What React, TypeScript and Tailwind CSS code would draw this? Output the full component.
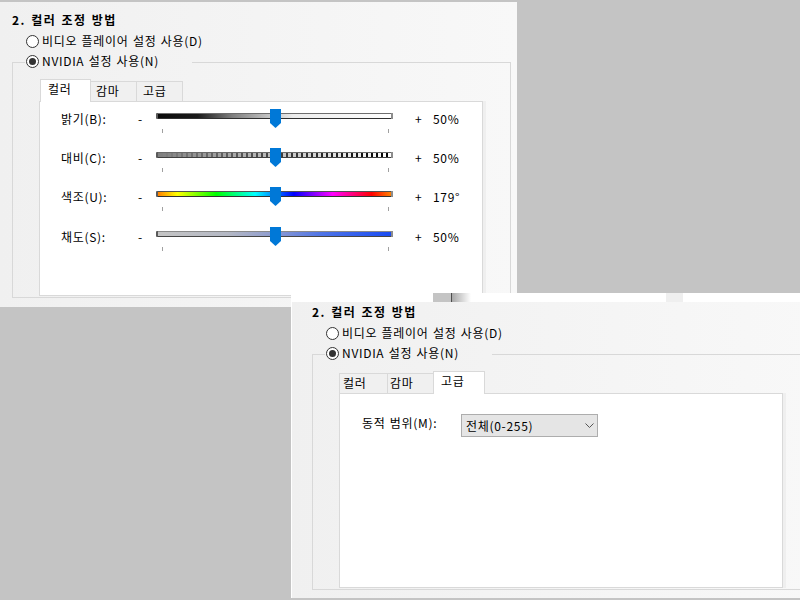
import React from "react";

function Radio({ checked, label }: { checked?: boolean; label: string }) {
  return (
    <div className="flex h-[16px] items-center">
      <span className="flex h-[13px] w-[13px] shrink-0 items-center justify-center rounded-full border border-[#333333] bg-white">
        {checked && <span className="h-[7px] w-[7px] rounded-full bg-[#333333]" />}
      </span>
      <span className="ml-[3px] whitespace-nowrap">{label}</span>
    </div>
  );
}

function ContrastFill() {
  const w = 233;
  const rects: React.ReactNode[] = [];
  for (let x = 0; x < w; x += 5) {
    const t = x / w;
    const light = Math.round(128 + 127 * t);
    const dark = Math.round(128 - 128 * t);
    rects.push(
      <rect key={"l" + x} x={x} y={0} width={3} height={4} fill={`rgb(${light},${light},${light})`} />
    );
    rects.push(
      <rect key={"d" + x} x={x + 3} y={0} width={2} height={4} fill={`rgb(${dark},${dark},${dark})`} />
    );
  }
  return (
    <div className="flex-1 border-y border-t-[#6a6a6a] border-b-[#404040]">
      <svg width={w} height={4} className="block">
        {rects}
      </svg>
    </div>
  );
}

function Fill({ kind }: { kind: string }) {
  if (kind === "c") return <ContrastFill />;
  if (kind === "b")
    return (
      <div className="flex-1 border-y border-t-[#6e6e6e] border-b-[#303030] bg-[linear-gradient(to_right,#0a0a0a_0%,#1a1a1a_17%,#808080_32%,#bdbdbd_46%,#ececec_58%,#ffffff_100%)]" />
    );
  if (kind === "h")
    return (
      <div className="flex-1 border-y border-t-[#505050] border-b-[#303030] bg-[linear-gradient(to_right,#ff8000_0%,#ffff00_8.3%,#00ff00_25%,#00ffff_41.7%,#0000ff_58.3%,#ff00ff_75%,#ff0000_91.7%,#ff8000_100%)]" />
    );
  return (
    <div className="flex-1 border-y border-t-[#8a8a8a] border-b-[#454545] bg-[linear-gradient(to_right,#c4c4c4_0%,#b4b8c4_30%,#8d9bd0_50%,#4f74e6_70%,#1a4cf2_100%)]" />
  );
}

function Slider({ kind }: { kind: string }) {
  return (
    <div className="flex w-[237px] shrink-0 flex-col">
      <div className="relative h-[19px]">
        <div className="mt-[4px] flex h-[6px] w-[237px]">
          <div className="w-[2px] rounded-l-[1px] bg-[#5a5a5a]" />
          <Fill kind={kind} />
          <div className="w-[2px] bg-[#8c8c8c]" />
        </div>
        <svg width="11" height="19" viewBox="0 0 11 19" className="absolute left-[114px] top-0">
          <path d="M0 0H11V14L5.5 19L0 14Z" fill="#0078d7" />
        </svg>
      </div>
      <div className="mt-[1px] flex h-[4px] justify-between pl-[6px] pr-[4px]">
        <div className="h-[4px] w-[1px] bg-[#a0a0a0]" />
        <div className="h-[4px] w-[1px] bg-[#a0a0a0]" />
      </div>
    </div>
  );
}

const rows = [
  { label: "밝기(B):", value: "50%", kind: "b", h: "h-[39px]" },
  { label: "대비(C):", value: "50%", kind: "c", h: "h-[39px]" },
  { label: "색조(U):", value: "179°", kind: "h", h: "h-[40px]" },
  { label: "채도(S):", value: "50%", kind: "s", h: "h-[39px]" },
];

function Header() {
  return (
    <>
      <div className="ml-[12px] h-[16px] whitespace-nowrap font-bold tracking-[1.5px]">2. 컬러 조정 방법</div>
      <div className="ml-[26px] mt-[5px]">
        <Radio label="비디오 플레이어 설정 사용(D)" />
      </div>
    </>
  );
}

function Group({ children }: { children: React.ReactNode }) {
  return (
    <fieldset className="ml-[12px] mt-[3px] w-[499px] border border-[#d8d8d8] pb-[1px] pt-[6px]">
      <legend className="ml-[12px] h-[21px] w-[167px] pl-[1px] pt-[1px]">
        <Radio checked label="NVIDIA 설정 사용(N)" />
      </legend>
      <div className="ml-[26px] w-[444px]">{children}</div>
    </fieldset>
  );
}

function Panel({ children }: { children: React.ReactNode }) {
  return (
    <div className="h-[195px] w-[444px] border border-[#d9d9d9] bg-white shadow-[3px_0_0_0_#efefef]">
      {children}
    </div>
  );
}

export default function App() {
  return (
    <div className="relative h-[600px] w-[800px] overflow-hidden bg-[#c4c4c4] font-['Noto_Sans_CJK_KR',sans-serif] text-[12px] leading-[16px] tracking-[0.7px] text-black [word-spacing:1px]">
      {/* Window 1 */}
      <div className="absolute left-0 top-[2px] h-[305px] w-[517px] bg-[linear-gradient(to_right,#f0f0f0,#f8f8f8)]">
        <div className="pt-[10px]">
          <Header />
          <Group>
            <div className="flex h-[22px] items-end">
              <div className="relative z-10 -mb-[1px] ml-[1px] h-[23px] w-[51px] border-x border-t border-[#d9d9d9] bg-white pl-[7px] pt-[1px]">
                컬러
              </div>
              <div className="h-[20px] w-[46px] border-r border-t border-[#d9d9d9] bg-[#f0f0f0] pl-[5px] pt-[1px]">
                감마
              </div>
              <div className="h-[20px] w-[46px] border-r border-t border-[#d9d9d9] bg-[#f0f0f0] pl-[6px] pt-[1px]">
                고급
              </div>
            </div>
            <Panel>
              <div className="flex flex-col pl-[21px] pt-[7px]">
                {rows.map((r) => (
                  <div key={r.label} className={`flex items-start ${r.h}`}>
                    <div className="mt-[2px] w-[77px] shrink-0 whitespace-nowrap">{r.label}</div>
                    <div className="mt-[2px] w-[18px] shrink-0">-</div>
                    <Slider kind={r.kind} />
                    <div className="ml-[22px] mt-[2px] w-[18px] shrink-0">+</div>
                    <div className="mt-[2px] whitespace-nowrap">{r.value}</div>
                  </div>
                ))}
              </div>
            </Panel>
          </Group>
        </div>
      </div>

      {/* Window 2 */}
      <div className="absolute left-[291px] top-[293px] h-[305px] w-[520px] border-l border-white [background:linear-gradient(to_bottom,#ffffff_9px,transparent_9px),linear-gradient(to_right,#f0f0f0,#f8f8f8)]">
        <div className="absolute left-[141px] top-0 h-[9px] w-[18px] bg-[#c4c4c4]" />
        <div className="absolute left-[159px] top-0 h-[9px] w-[1px] bg-[#4d4d4d]" />
        <div className="absolute left-[160px] top-0 h-[9px] w-[19px] bg-[linear-gradient(to_right,#a8a8a8,#ffffff)]" />
        <div className="absolute left-[374px] top-0 h-[9px] w-[17px] bg-[#efefef]" />
        <div className="ml-[8px] pt-[11px]">
          <Header />
          <Group>
            <div className="flex h-[22px] items-end">
              <div className="h-[20px] w-[49px] border-x border-t border-[#d9d9d9] bg-[#f0f0f0] pl-[3px] pt-[1px]">
                컬러
              </div>
              <div className="h-[20px] w-[46px] border-r border-t border-[#d9d9d9] bg-[#f0f0f0] pl-[2px] pt-[1px]">
                감마
              </div>
              <div className="relative z-10 -mb-[1px] -ml-[1px] h-[23px] w-[52px] border-x border-t border-[#d9d9d9] bg-white pl-[7px] pt-[1px]">
                고급
              </div>
            </div>
            <Panel>
              <div className="flex items-start pl-[22px] pt-[20px]">
                <div className="mt-[1px] w-[99px] shrink-0 whitespace-nowrap">동적 범위(M):</div>
                <div className="flex h-[23px] w-[137px] items-center justify-between border border-[#adadad] bg-[#e5e5e5] pl-[4px] pr-[3px]">
                  <span className="whitespace-nowrap">전체(0-255)</span>
                  <svg width="9" height="5" viewBox="0 0 9 5" className="block">
                    <path d="M0.5 0.5L4.5 4.5L8.5 0.5" fill="none" stroke="#555555" strokeWidth="1" />
                  </svg>
                </div>
              </div>
            </Panel>
          </Group>
        </div>
      </div>
    </div>
  );
}
